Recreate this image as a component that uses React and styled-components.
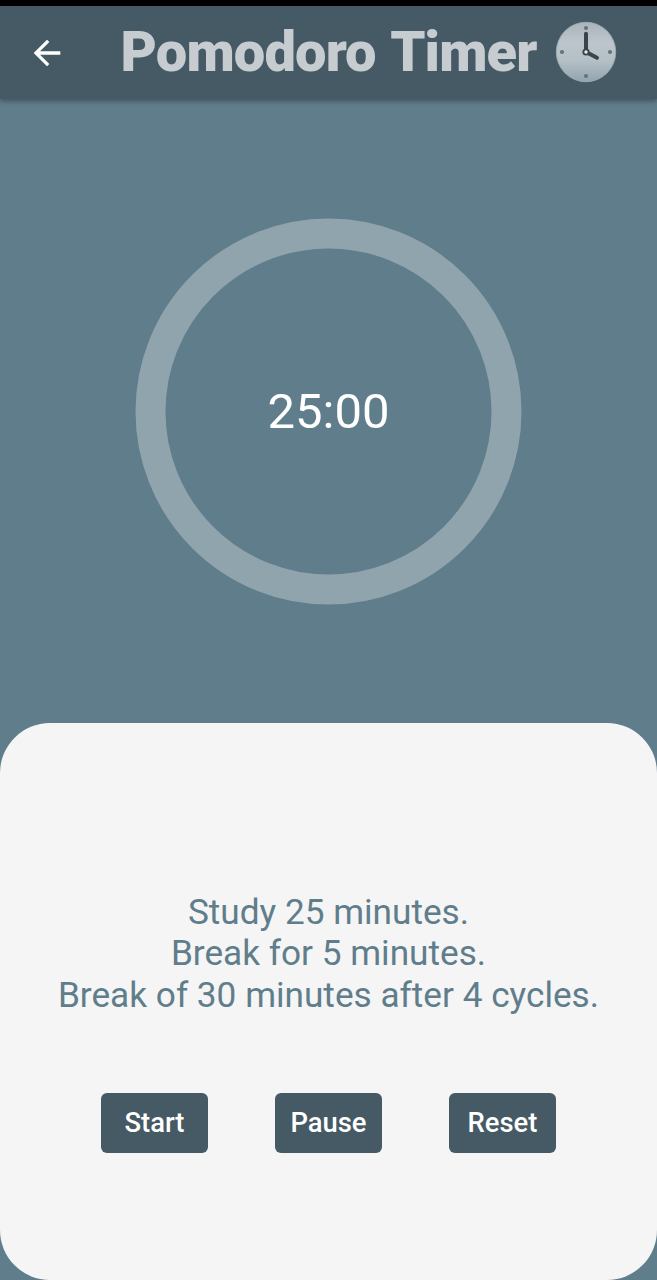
import React from 'react';
import styled, { createGlobalStyle } from 'styled-components';

const Global = createGlobalStyle`
  * { box-sizing: border-box; }
  body { margin: 0; font-family: Roboto, sans-serif; background: #607d8b; overflow: hidden; }
`;
const Screen = styled.div`
  height: 1280px; display: flex; flex-direction: column; background: #607d8b;
`;
const StatusStrip = styled.div`
  height: 6px; background: #000;
`;
const AppBar = styled.header`
  height: 93px; display: flex; align-items: center; padding-left: 26.5px;
  background: #455a64; box-shadow: 0 2px 5px rgba(0,0,0,.35);
`;
const BackButton = styled.button`
  border: 0; padding: 0; background: none; width: 40px; height: 40px; display: flex;
`;
const Title = styled.h1`
  margin: 0 0 2px 54px; width: 434px; font-size: 56px; line-height: 66px; font-weight: 900;
  letter-spacing: -0.85px; word-spacing: 3px; color: #c7ccd1; white-space: nowrap;
`;
const ClockFace = styled.svg`
  width: 62px; height: 62px; margin-bottom: 1px;
`;
const TimerArea = styled.main`
  height: 624px; display: grid; place-items: center;
`;
const Dial = styled.div`
  display: grid; place-items: center;
  > * { grid-area: 1 / 1; }
`;
const Ring = styled.svg`
  width: 387px; height: 388px; fill: none; stroke: #90a4ae; stroke-width: 30px;
`;
const Remaining = styled.span`
  color: #fff; font-size: 49px;
`;
const Panel = styled.section`
  height: 557px; border-radius: 50px; background: #f5f5f5;
  display: flex; flex-direction: column; align-items: center; padding-top: 168.6px;
`;
const Instructions = styled.p`
  margin: 0; text-align: center; color: #607d8b; font-size: 35.2px; line-height: 41.8px; white-space: pre;
`;
const Actions = styled.div`
  display: flex; gap: 67px; margin-top: 76px;
`;
const ActionButton = styled.button`
  width: 107px; height: 60px; border: 0; border-radius: 6px; padding: 0;
  background: #455a64; color: #fff; font: 500 27.4px Roboto, sans-serif;
`;

function Clock() {
  return (
    <ClockFace viewBox="0 0 62 62" aria-label="Four o'clock">
      <defs>
        <linearGradient id="face" x1="0" y1="0" x2="0" y2="1">
          <stop offset="0" stopColor="#aab4ba" />
          <stop offset="0.35" stopColor="#bcc6cc" />
          <stop offset="0.65" stopColor="#b3bfc6" />
          <stop offset="1" stopColor="#93a4ae" />
        </linearGradient>
      </defs>
      <circle cx="31" cy="31" r="29.7" fill="url(#face)" stroke="#9aabb4" strokeWidth="1" />
      <g fill="#667279">
        <circle cx="31" cy="7" r="2.1" />
        <circle cx="55" cy="31" r="2.1" />
        <circle cx="31" cy="55" r="2.1" />
        <circle cx="7" cy="31" r="2.1" />
      </g>
      <path d="M31 31V12.8M31 31L42 36.8" stroke="#3a4449" strokeWidth="4" strokeLinecap="round" />
      <circle cx="31" cy="31" r="3.6" fill="#3a4449" />
      <circle cx="31" cy="31" r="1.7" fill="#e4e8ea" />
    </ClockFace>
  );
}

export default function App() {
  return (
    <Screen>
      <Global />
      <StatusStrip />
      <AppBar>
        <BackButton aria-label="Back">
          <svg width="40" height="40" viewBox="0 0 24 24" fill="#fff"><path d="M20 11H7.83l5.59-5.59L12 4l-8 8 8 8 1.41-1.41L7.83 13H20z" /></svg>
        </BackButton>
        <Title>Pomodoro Timer</Title>
        <Clock />
      </AppBar>
      <TimerArea>
        <Dial>
          <Ring viewBox="0 0 387 388"><circle cx="193.5" cy="194.5" r="178" /></Ring>
          <Remaining>25:00</Remaining>
        </Dial>
      </TimerArea>
      <Panel>
        <Instructions>{'Study 25 minutes.\nBreak for 5 minutes.\nBreak of 30 minutes after 4 cycles.'}</Instructions>
        <Actions>
          <ActionButton>Start</ActionButton>
          <ActionButton>Pause</ActionButton>
          <ActionButton>Reset</ActionButton>
        </Actions>
      </Panel>
    </Screen>
  );
}
